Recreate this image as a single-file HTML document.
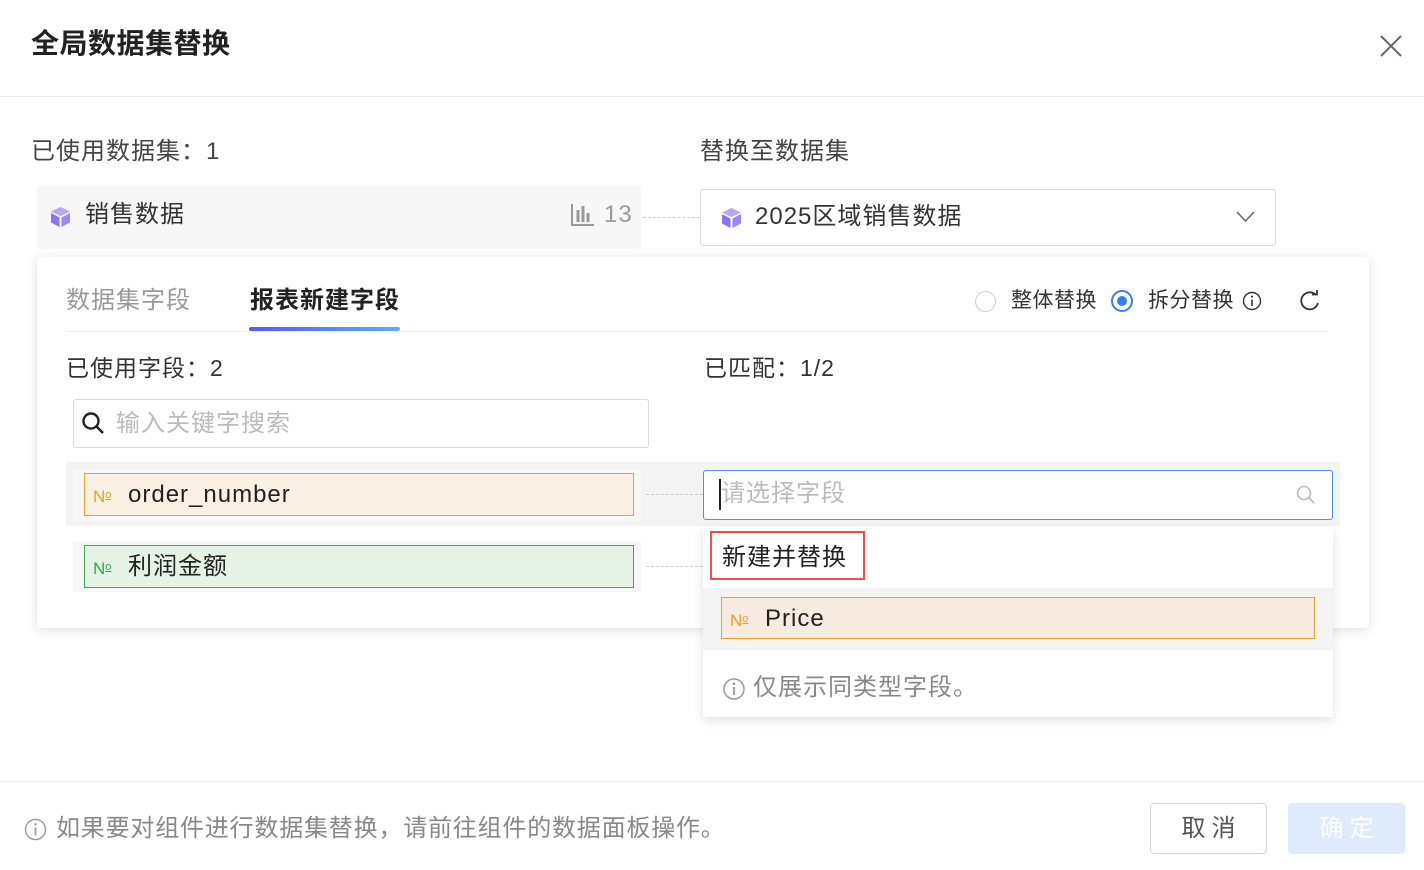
<!DOCTYPE html>
<html><head><meta charset="utf-8"><style>
*{margin:0;padding:0;box-sizing:border-box}
body{width:1424px;height:870px;background:#fff;position:relative;overflow:hidden;font-family:"Liberation Sans","Noto Sans CJK SC",sans-serif;color:#333}
.a{position:absolute;white-space:nowrap}
.t24{font-size:24px;line-height:30px;letter-spacing:1px}
.dash{position:absolute;border-top:1px dashed #ccc;height:0}
.no{font-size:17px;line-height:20px}
.no u{font-size:11px;vertical-align:4px;text-decoration:underline}
</style></head><body>
<div class="a" style="left:31px;top:27px;font-size:28px;line-height:34px;font-weight:bold;color:#222;letter-spacing:0.5px">全局数据集替换</div>
<svg class="a" style="left:1379px;top:34px" width="24" height="24"><path d="M2 2L22 22M22 2L2 22" stroke="#666" stroke-width="2"/></svg>
<div class="a" style="left:0;top:96px;width:1424px;height:1px;background:#eee"></div>

<div class="a t24" style="left:31px;top:137px;color:#444">已使用数据集：1</div>
<div class="a t24" style="left:700px;top:137px;color:#444">替换至数据集</div>

<div class="a" style="left:37px;top:185px;width:604px;height:64px;background:#f7f7f7;border-radius:3px"></div>
<svg class="a" style="left:50px;top:206px" width="21" height="22" viewBox="0 0 21 22"><path d="M10.5 1L20 5.5 10.5 10 1 5.5Z" fill="#b9a6f5"/><path d="M1 7L9.5 11.5V21L1 16.5Z" fill="#8b74ee"/><path d="M20 7L11.5 11.5V21L20 16.5Z" fill="#9c87f2"/></svg>
<div class="a t24" style="left:85px;top:200px;color:#333">销售数据</div>
<svg class="a" style="left:571px;top:204px" width="24" height="22"><path d="M1 0V21H23" stroke="#999" stroke-width="2" fill="none"/><path d="M7 6V18M12 2V18M17 9V18" stroke="#999" stroke-width="3"/></svg>
<div class="a t24" style="left:604px;top:200px;color:#999">13</div>
<div class="dash" style="left:643px;top:217px;width:57px"></div>

<div class="a" style="left:700px;top:189px;width:576px;height:57px;border:1px solid #d9d9d9;border-radius:3px"></div>
<svg class="a" style="left:721px;top:207px" width="21" height="22" viewBox="0 0 21 22"><path d="M10.5 1L20 5.5 10.5 10 1 5.5Z" fill="#b9a6f5"/><path d="M1 7L9.5 11.5V21L1 16.5Z" fill="#8b74ee"/><path d="M20 7L11.5 11.5V21L20 16.5Z" fill="#9c87f2"/></svg>
<div class="a t24" style="left:755px;top:202px;color:#333">2025区域销售数据</div>
<svg class="a" style="left:1236px;top:210px" width="19" height="13"><path d="M1 2L9.5 11 18 2" stroke="#666" stroke-width="1.6" fill="none"/></svg>

<div class="a" style="left:37px;top:257px;width:1332px;height:371px;background:#fff;box-shadow:0 2px 12px rgba(0,0,0,.12);border-radius:3px"></div>
<div class="a t24" style="left:66px;top:286px;color:#999">数据集字段</div>
<div class="a t24" style="left:250px;top:286px;color:#222;font-weight:bold">报表新建字段</div>
<div class="a" style="left:66px;top:331px;width:1262px;height:1px;background:#eee"></div>
<div class="a" style="left:249px;top:327px;width:151px;height:4px;border-radius:2px;background:linear-gradient(90deg,#5a5af0,#5cacf0)"></div>
<div class="a" style="left:975px;top:291px;width:21px;height:21px;border:1px solid #ccc;border-radius:50%"></div>
<div class="a" style="left:1011px;top:286px;font-size:21px;line-height:30px;color:#333;letter-spacing:0.5px">整体替换</div>
<div class="a" style="left:1111px;top:290px;width:22px;height:22px;border:2px solid #3a7ef5;border-radius:50%"><div style="margin:4px;width:10px;height:10px;border-radius:50%;background:#3a7ef5"></div></div>
<div class="a" style="left:1148px;top:286px;font-size:21px;line-height:30px;color:#333;letter-spacing:0.5px">拆分替换</div>
<svg class="a" style="left:1242px;top:291px" width="20" height="20"><circle cx="10" cy="10" r="8.5" stroke="#333" stroke-width="1.4" fill="none"/><path d="M10 8.5V15" stroke="#333" stroke-width="1.6"/><circle cx="10" cy="5.6" r="1.1" fill="#333"/></svg>
<svg class="a" style="left:1299px;top:290px" width="22" height="22"><path d="M17 5A8.5 8.5 0 1 0 19 13" stroke="#333" stroke-width="1.8" fill="none"/><path d="M13 4.5L18 4.5 18 0" stroke="#333" stroke-width="1.8" fill="none"/></svg>

<div class="a t24" style="left:66px;top:353px;color:#333;font-size:23px">已使用字段：2</div>
<div class="a t24" style="left:704px;top:353px;color:#333;font-size:23px">已匹配：1/2</div>
<div class="a" style="left:73px;top:399px;width:576px;height:49px;border:1px solid #d9d9d9;border-radius:3px"></div>
<svg class="a" style="left:81px;top:411px" width="26" height="26"><circle cx="10" cy="10" r="7.5" stroke="#222" stroke-width="2.4" fill="none"/><path d="M15.5 15.5L22 22" stroke="#222" stroke-width="2.6"/></svg>
<div class="a t24" style="left:116px;top:409px;color:#bbb">输入关键字搜索</div>

<div class="a" style="left:66px;top:462px;width:1274px;height:64px;background:#f3f3f3"></div>
<div class="a" style="left:73px;top:470px;width:568px;height:51px;background:#f7f7f7"></div>
<div class="a" style="left:84px;top:473px;width:550px;height:43px;background:#faf0e4;border:1px solid #f0a030"></div>
<div class="a no" style="left:93px;top:485px;color:#f0a020">N<u>o</u></div>
<div class="a t24" style="left:128px;top:480px;color:#222">order_number</div>
<div class="dash" style="left:646px;top:494px;width:57px"></div>
<div class="a" style="left:703px;top:470px;width:630px;height:50px;background:#fff;border:1px solid #4a90f0;border-radius:3px"></div>
<div class="a" style="left:719px;top:479px;width:2px;height:31px;background:#222"></div>
<div class="a t24" style="left:721px;top:479px;color:#bbb">请选择字段</div>
<svg class="a" style="left:1295px;top:484px" width="22" height="22"><circle cx="9" cy="9" r="6.5" stroke="#bbb" stroke-width="1.6" fill="none"/><path d="M13.5 13.5L19 19" stroke="#bbb" stroke-width="1.8"/></svg>

<div class="a" style="left:73px;top:541px;width:568px;height:51px;background:#f7f7f7"></div>
<div class="a" style="left:84px;top:545px;width:550px;height:43px;background:#e6f2e6;border:1px solid #3cb050"></div>
<div class="a no" style="left:93px;top:557px;color:#2cb040">N<u>o</u></div>
<div class="a t24" style="left:128px;top:552px;color:#222">利润金额</div>
<div class="dash" style="left:646px;top:566px;width:57px"></div>

<div class="a" style="left:703px;top:527px;width:630px;height:190px;background:#fff;box-shadow:0 3px 10px rgba(0,0,0,.12)"></div>
<div class="a" style="left:710px;top:531px;width:155px;height:49px;border:2px solid #f0504a"></div>
<div class="a t24" style="left:722px;top:543px;color:#222">新建并替换</div>
<div class="a" style="left:703px;top:588px;width:630px;height:62px;background:#f3f3f3"></div>
<div class="a" style="left:721px;top:597px;width:594px;height:42px;background:#f7ebe0;border:1px solid #f0a030"></div>
<div class="a no" style="left:730px;top:609px;color:#f0a020">N<u>o</u></div>
<div class="a t24" style="left:765px;top:604px;color:#222">Price</div>
<svg class="a" style="left:722px;top:677px" width="24" height="24"><circle cx="12" cy="12" r="10" stroke="#999" stroke-width="1.5" fill="none"/><path d="M12 10V18" stroke="#999" stroke-width="1.8"/><circle cx="12" cy="6.8" r="1.3" fill="#999"/></svg>
<div class="a t24" style="left:753px;top:673px;color:#888">仅展示同类型字段。</div>

<div class="a" style="left:0;top:781px;width:1424px;height:1px;background:#eee"></div>
<svg class="a" style="left:24px;top:818px" width="23" height="23"><circle cx="11.5" cy="11.5" r="10" stroke="#999" stroke-width="1.4" fill="none"/><path d="M11.5 9.5V17.5" stroke="#999" stroke-width="1.7"/><circle cx="11.5" cy="6.3" r="1.2" fill="#999"/></svg>
<div class="a" style="left:56px;top:814px;font-size:24px;line-height:30px;color:#888;letter-spacing:0.8px">如果要对组件进行数据集替换，请前往组件的数据面板操作。</div>
<div class="a" style="left:1150px;top:803px;width:117px;height:51px;border:1px solid #d5d5d5;border-radius:4px;text-align:center;font-size:24px;line-height:49px;color:#555;letter-spacing:6px;padding-left:6px">取消</div>
<div class="a" style="left:1288px;top:803px;width:117px;height:51px;background:#dfeafc;border-radius:4px;text-align:center;font-size:24px;line-height:51px;color:#fff;letter-spacing:6px;padding-left:6px">确定</div>
</body></html>
